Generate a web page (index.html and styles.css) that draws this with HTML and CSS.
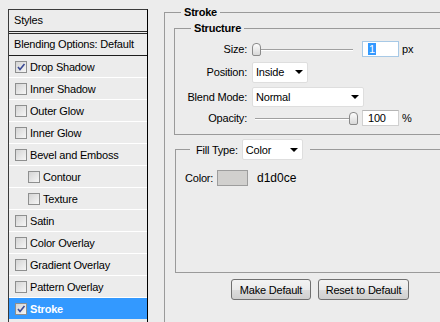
FILE: index.html
```html
<!DOCTYPE html>
<html lang="en">
<head>
    <meta charset="UTF-8">
    <title>Layer Style - Stroke</title>
    <link rel="stylesheet" href="styles.css">
</head>
<body>
    <div class="window">
        <div class="styles-panel">
            <div class="panel-head">Styles</div>
            <div class="panel-blend">Blending Options: Default</div>
            <div class="style-row"><span class="check"><svg viewBox="0 0 10 10"><path d="M2 5 L4 7.5 L8.5 2"/></svg></span>Drop Shadow</div>
            <div class="style-row"><span class="check"></span>Inner Shadow</div>
            <div class="style-row"><span class="check"></span>Outer Glow</div>
            <div class="style-row"><span class="check"></span>Inner Glow</div>
            <div class="style-row"><span class="check"></span>Bevel and Emboss</div>
            <div class="style-row sub"><span class="check"></span>Contour</div>
            <div class="style-row sub"><span class="check"></span>Texture</div>
            <div class="style-row"><span class="check"></span>Satin</div>
            <div class="style-row"><span class="check"></span>Color Overlay</div>
            <div class="style-row"><span class="check"></span>Gradient Overlay</div>
            <div class="style-row"><span class="check"></span>Pattern Overlay</div>
            <div class="style-row active"><span class="check"><svg viewBox="0 0 10 10"><path d="M2 5 L4 7.5 L8.5 2"/></svg></span>Stroke</div>
        </div>

        <fieldset class="group stroke">
            <legend>Stroke</legend>

            <fieldset class="group structure">
                <legend>Structure</legend>
                <div class="form">
                    <div class="form-label row-size">Size:</div>
                    <div class="form-ctrl row-size">
                        <div class="slider"><span class="track"></span><span class="thumb" style="left:0px"></span></div>
                        <div class="num focus"><span class="sel">1</span></div>
                        <span class="unit">px</span>
                    </div>

                    <div class="form-label row-pos">Position:</div>
                    <div class="form-ctrl row-pos">
                        <div class="select w-pos"><span>Inside</span><i class="arrow"></i></div>
                    </div>

                    <div class="form-label row-mode">Blend Mode:</div>
                    <div class="form-ctrl row-mode">
                        <div class="select w-mode"><span>Normal</span><i class="arrow"></i></div>
                    </div>

                    <div class="form-label row-size">Opacity:</div>
                    <div class="form-ctrl row-size">
                        <div class="slider"><span class="track"></span><span class="thumb" style="left:97px"></span></div>
                        <div class="num">100</div>
                        <span class="unit">%</span>
                    </div>
                </div>
            </fieldset>

            <fieldset class="group fill">
                <legend>
                    <span class="fill-label">Fill Type:</span>
                    <span class="select w-fill"><span>Color</span><i class="arrow"></i></span>
                </legend>
                <div class="color-row">
                    <span class="color-label">Color:</span>
                    <span class="swatch"></span>
                    <span class="hex">d1d0ce</span>
                </div>
            </fieldset>

            <div class="actions">
                <button class="btn w-make">Make Default</button>
                <button class="btn w-reset">Reset to Default</button>
            </div>
        </fieldset>
    </div>
</body>
</html>
```

FILE: styles.css
```css
body {
    margin: 0;
    height: 322px;
    overflow: hidden;
    background: #ececec;
    font-family: "Liberation Sans", Arial, sans-serif;
    font-size: 11px;
    letter-spacing: -0.2px;
    color: #000;
}
.window {
    display: flex;
    align-items: flex-start;
}

/* left list */
.styles-panel {
    flex: none;
    width: 138px;
    height: 330px;
    margin: 9px 0 0 8px;
    border: 1px solid #3a3a3a;
    border-right-color: #000;
    border-bottom: none;
    background: #ececec;
}
.panel-head {
    height: 21px;
    line-height: 21px;
    padding-left: 5px;
    border-bottom: 3px double #2b2b2b;
}
.panel-blend {
    height: 21px;
    line-height: 21px;
    padding-left: 5px;
    border-bottom: 1px solid #1e1e1e;
}
.style-row {
    height: 21px;
    display: flex;
    align-items: center;
    padding-left: 6px;
    border-bottom: 1px solid #fff;
}
.style-row.sub {
    padding-left: 19px;
}
.style-row.active {
    background: #3399ff;
    color: #fff;
    font-weight: bold;
    border-bottom: none;
}
.check {
    flex: none;
    width: 10px;
    height: 10px;
    margin-right: 3px;
    border: 1px solid #8e8f8f;
    background: linear-gradient(135deg, #d4d4d4, #f6f6f6);
    display: flex;
}
.check svg {
    width: 10px;
    height: 10px;
}
.check path {
    fill: none;
    stroke: #3b4a94;
    stroke-width: 1.6;
}

/* right side */
.group {
    margin: 0;
    padding: 0;
    min-width: 0;
    border: 1px solid #9a9a9a;
}
.group legend {
    font-weight: bold;
    line-height: 13px;
    padding: 0 3px;
}
.stroke {
    flex: none;
    width: 300px;
    margin: 6px 0 0 16px;
    padding: 0 0 60px 9px;
}
.stroke > legend {
    margin-left: 7px;
}
.structure {
    margin-top: 3px;
    padding: 4px 0 6px 0;
}
.structure > legend {
    margin-left: 16px;
}
.form {
    display: grid;
    grid-template-columns: 72px 1fr;
    column-gap: 5px;
}
.form-label {
    display: flex;
    align-items: center;
    justify-content: flex-end;
}
.form-ctrl {
    display: flex;
    align-items: center;
}
.row-size { height: 20px; }
.row-pos { height: 26px; }
.row-mode { height: 23px; }

.slider {
    position: relative;
    width: 104px;
    height: 13px;
    margin-right: 6px;
}
.track {
    position: absolute;
    left: 3px;
    right: 3px;
    top: 6px;
    height: 1px;
    background: #a0a0a0;
    border-bottom: 1px solid #fff;
}
.thumb {
    position: absolute;
    top: 0;
    width: 7px;
    height: 11px;
    border: 1px solid #8a8a8a;
    border-radius: 4px 4px 2px 2px;
    background: linear-gradient(#fdfdfd, #d8d8d8);
}
.num {
    box-sizing: border-box;
    width: 37px;
    height: 16px;
    padding-left: 5px;
    display: flex;
    align-items: center;
    background: #fff;
    border: 1px solid #d0d0d0;
    border-top-color: #b5b5b5;
}
.num.focus {
    border-color: #a7c9e6;
}
.sel {
    background: #3399ff;
    color: #fff;
    padding: 0 1px;
    line-height: 12px;
}
.unit {
    margin-left: 3px;
}
.select {
    box-sizing: border-box;
    height: 21px;
    display: flex;
    align-items: center;
    justify-content: space-between;
    padding: 0 4px 0 3px;
    background: #fff;
    border: 1px solid #dedede;
    border-radius: 2px;
    font-weight: normal;
}
.w-pos { width: 56px; }
.w-mode { width: 112px; height: 20px; }
.w-fill { width: 61px; }
.arrow {
    width: 0;
    height: 0;
    border-top: 4px solid #000;
    border-left: 4px solid transparent;
    border-right: 4px solid transparent;
}

.fill {
    margin: 4px 0 0 1px;
    padding: 8px 0 84px 9px;
}
.fill > legend {
    display: flex;
    align-items: center;
    margin-left: 5px;
    padding: 0 7px 0 6px;
    line-height: normal;
}
.fill-label {
    font-weight: normal;
    margin-right: 4px;
}
.color-row {
    display: flex;
    align-items: center;
    height: 20px;
}
.color-label {
    width: 32px;
}
.swatch {
    box-sizing: border-box;
    width: 31px;
    height: 16px;
    background: #d1d0ce;
    border: 1px solid #9d9d9d;
}
.hex {
    margin-left: 9px;
    font-size: 12px;
    letter-spacing: 0;
}

.actions {
    display: flex;
    gap: 7px;
    margin: 6px 0 0 57px;
}
.btn {
    box-sizing: border-box;
    height: 21px;
    padding: 0;
    font-family: inherit;
    font-size: 11px;
    letter-spacing: -0.2px;
    color: #000;
    border: 1px solid #707070;
    border-radius: 3px;
    background: linear-gradient(#f3f3f3 0%, #ebebeb 50%, #dddddd 51%, #cfcfcf 100%);
}
.w-make { width: 80px; }
.w-reset { width: 91px; }
```
